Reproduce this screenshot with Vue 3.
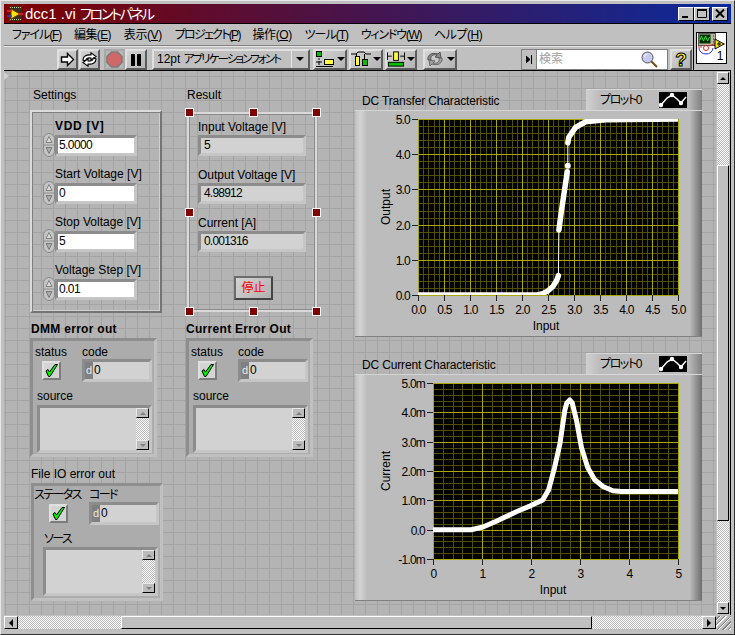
<script setup>
// [text, underlined letter, letter-spacing]
const menus = [
  ['ファイル(', 'F', -1.1],
  ['編集(', 'E', -0.6],
  ['表示(', 'V', -0.4],
  ['プロジェクト(', 'P', -1.7],
  ['操作(', 'O', -0.4],
  ['ツール(', 'T', -1],
  ['ウィンドウ(', 'W', -1.25],
  ['ヘルプ(', 'H', -0.5],
]

const settings = [
  { label: 'VDD [V]', value: '5.0000', bold: true },
  { label: 'Start Voltage [V]', value: '0' },
  { label: 'Stop Voltage [V]', value: '5' },
  { label: 'Voltage Step [V]', value: '0.01' },
]

const results = [
  { label: 'Input Voltage [V]', value: '5' },
  { label: 'Output Voltage [V]', value: '4.98912' },
  { label: 'Current [A]', value: '0.001316' },
]

const handles = ['tl', 'tc', 'tr', 'ml', 'mr', 'bl', 'bc', 'br']

const clusters = [
  { cls: 'dmm', status: 'status', code: 'code', source: 'source' },
  { cls: 'cur', status: 'status', code: 'code', source: 'source' },
  { cls: 'file', status: 'ステータス', code: 'コード', source: 'ソース' },
]

const range = (n) => Array.from({ length: n }, (_, i) => i)

const makeChart = (cfg) => {
  const { x, w, ymin, ymax, xDiv, yDiv, xLabel, yLabel } = cfg
  const y = 9
  const h = 176
  const sx = (v) => x + (v / 5) * w
  const sy = (v) => y + h * (1 - (v - ymin) / (ymax - ymin))
  const line = (pts) => pts.map(([a, b]) => `${sx(a).toFixed(1)},${sy(b).toFixed(1)}`).join(' ')
  const minorX = range(xDiv * 5 + 1).map((i) => Math.round(x + (i * w) / (xDiv * 5)) + 0.5)
  const minorY = range(yDiv * 5 + 1).map((i) => Math.round(y + (i * h) / (yDiv * 5)) + 0.5)
  const majorX = range(xDiv + 1).map((i) => Math.round(x + (i * w) / xDiv) + 0.5)
  const majorY = range(yDiv + 1).map((i) => Math.round(y + (i * h) / yDiv) + 0.5)
  return {
    ...cfg, y, h, minorX, minorY, majorX, majorY,
    clip: cfg.id + '-clip',
    xLabels: xLabel.map((t, i) => ({ t, x: majorX[i] })),
    yLabels: yLabel.map((t, i) => ({ t, y: majorY[i] })),
    thin: cfg.thin.map(line),
    thick: cfg.thick.map(line),
    dots: (cfg.dots || []).map(([a, b]) => ({ cx: sx(a), cy: sy(b) })),
  }
}

const charts = [
  makeChart({
    id: 'transfer',
    cls: 'chart-a',
    title: 'DC Transfer Characteristic',
    x: 63, w: 260, ymin: 0, ymax: 5, xDiv: 10, yDiv: 5,
    xLabel: ['0.0', '0.5', '1.0', '1.5', '2.0', '2.5', '3.0', '3.5', '4.0', '4.5', '5.0'],
    yLabel: ['5.0', '4.0', '3.0', '2.0', '1.0', '0.0'],
    axisX: 191, axisY: 'Output', textRight: 55, tickLeft: 57,
    stroke: 5.5,
    thin: [[[2.7, 0.55], [2.71, 1.8]], [[2.88, 3.67], [2.88, 4.3]]],
    thick: [
      [[0, 0], [2.3, 0], [2.4, 0.04], [2.5, 0.12], [2.6, 0.25], [2.67, 0.42], [2.7, 0.55]],
      [[2.71, 1.85], [2.75, 2.3], [2.8, 2.8], [2.85, 3.3], [2.87, 3.5]],
      [[2.88, 4.32], [2.9, 4.48], [3.03, 4.76], [3.22, 4.92], [3.61, 4.98], [5, 5]],
    ],
    dots: [[2.88, 3.67]],
  }),
  makeChart({
    id: 'current',
    cls: 'chart-b',
    title: 'DC Current Characteristic',
    x: 78, w: 245, ymin: -1, ymax: 5, xDiv: 5, yDiv: 6,
    xLabel: ['0', '1', '2', '3', '4', '5'],
    yLabel: ['5.0m', '4.0m', '3.0m', '2.0m', '1.0m', '0.0', '-1.0m'],
    axisX: 198, axisY: 'Current', textRight: 70, tickLeft: 72,
    stroke: 5,
    thin: [],
    thick: [[
      [0, 0], [0.78, 0], [1.02, 0.09], [1.29, 0.29], [1.7, 0.61], [2.0, 0.82], [2.24, 1.01],
      [2.36, 1.36], [2.48, 2.11], [2.59, 2.92], [2.69, 4.07], [2.73, 4.32], [2.79, 4.42],
      [2.84, 4.32], [2.93, 3.71], [3.03, 2.79], [3.16, 2.11], [3.3, 1.7], [3.47, 1.47],
      [3.67, 1.33], [3.84, 1.3], [5, 1.3],
    ]],
  }),
]
</script>

<template>
  <div class="window">
    <div class="titlebar">
      <svg class="title-icon" width="16" height="16" viewBox="0 0 16 16">
        <rect x="2" y="0" width="13" height="15" fill="#3a3020" />
        <path d="M3 1h1v1H3zM5 1h1v1H5zM7 1h1v1H7zM9 1h1v1H9zM11 1h1v1h-1zM13 1h1v1h-1zM3 13h1v1H3zM5 13h1v1H5zM7 13h1v1H7zM9 13h1v1H9zM11 13h1v1h-1zM13 13h1v1h-1z" fill="#c8c8a0" />
        <path d="M4 3l9 5-9 5z" fill="#ffe000" stroke="#604000" stroke-width="1" />
        <path d="M0 5h5M11 8h5" stroke="#ff2020" stroke-width="1.4" />
        <path d="M0 10h5" stroke="#2040ff" stroke-width="1.4" />
      </svg>
      <span class="title-text">dcc1 .vi <span class="title-jp">フロントパネル</span></span>
      <div class="win-buttons">
        <button class="win-btn">
          <svg width="10" height="9"><rect x="1" y="7" width="6" height="2" fill="#000" /></svg>
        </button>
        <button class="win-btn">
          <svg width="10" height="9"><path d="M0.5 1.5h9v7h-9z" fill="none" stroke="#000" /><rect y="0" width="10" height="2" fill="#000" /></svg>
        </button>
        <button class="win-btn close-btn">
          <svg width="10" height="9"><path d="M1 0.5l8 8M9 0.5l-8 8" stroke="#000" stroke-width="2" /></svg>
        </button>
      </div>
    </div>

    <div class="chrome">
      <div class="bars">
        <div class="menubar">
          <span v-for="m in menus" :key="m[1]" class="menu-item" :style="{ letterSpacing: m[2] + 'px' }">{{ m[0] }}<u>{{ m[1] }}</u>)</span>
        </div>
        <div class="toolbar">
          <button class="tool tool-run">
            <svg width="15" height="15" viewBox="0 0 15 15"><path d="M1.5 5h6V1.5l6 6-6 6V10h-6z" fill="#fff" stroke="#000" stroke-width="1.4" /></svg>
          </button>
          <button class="tool tool-run gap-1">
            <svg width="17" height="15" viewBox="0 0 17 15">
              <path d="M2 8C2 4 6 2.5 10 3V0.8l5 3.7-5 3.6V6C7 5.6 5 6.3 4.6 9z" fill="#fff" stroke="#000" stroke-width="1.1" />
              <path d="M15 7c0 4-4 5.5-8 5v2.2l-5-3.7 5-3.6V9c3 .4 5-.3 5.4-3z" fill="#fff" stroke="#000" stroke-width="1.1" />
            </svg>
          </button>
          <button class="tool tool-run tool-flat gap-4">
            <svg width="17" height="17" viewBox="0 0 17 17">
              <path d="M5.5 1h6L16 5.5v6L11.5 16h-6L1 11.5v-6z" fill="#d06868" stroke="#7c7c7c" stroke-width="1.6" />
            </svg>
          </button>
          <button class="tool tool-pause">
            <svg width="12" height="13"><rect x="1" y="1" width="4" height="12" fill="#000" /><rect x="7" y="1" width="4" height="12" fill="#000" /></svg>
          </button>
          <div class="font-ring">
            <span class="font-name">12pt <span class="font-jp">アプリケーションフォント</span></span>
            <span class="font-arrow"><i class="caret"></i></span>
          </div>
          <button class="tool tool-menu gap-3">
            <svg width="20" height="16" viewBox="0 0 20 16">
              <rect x="1.5" y="0.5" width="5" height="5" fill="#00c000" stroke="#000" />
              <path d="M4 7v2M1 11h6M4 10v4M1 15.5h17" stroke="#000" />
              <rect x="9.5" y="8.5" width="9" height="5" fill="#ffff40" stroke="#000" />
            </svg>
            <i class="caret"></i>
          </button>
          <button class="tool tool-menu gap-2">
            <svg width="20" height="16" viewBox="0 0 20 16">
              <path d="M0 3h5l2-2h6l2 2h5" fill="none" stroke="#000" />
              <path d="M5.5 3v2M13.5 3v5" stroke="#000" />
              <rect x="4.5" y="5.5" width="4" height="9" fill="#ffff40" stroke="#000" />
              <rect x="11.5" y="8.5" width="5" height="6" fill="#00c000" stroke="#000" />
            </svg>
            <i class="caret"></i>
          </button>
          <button class="tool tool-menu dist gap-2">
            <svg width="19" height="16" viewBox="0 0 19 16">
              <path d="M0.5 1v8M18.5 1v8M1 5h4M14 5h4" stroke="#000" />
              <rect x="7" y="0.5" width="5" height="9" fill="#ffff40" stroke="#000" />
              <rect x="1.5" y="11.5" width="16" height="4" fill="#00c000" stroke="#000" />
            </svg>
            <i class="caret"></i>
          </button>
          <button class="tool tool-menu gap-6">
            <svg width="20" height="16" viewBox="0 0 20 16">
              <path d="M3 9C2 4 7 1 13 3l2-2 1 6-6-1 2-2C8 3 5 5 6 9z" fill="#8a8a8a" stroke="#555" />
              <path d="M17 7c1 5-4 8-10 6l-2 2-1-6 6 1-2 2c4 1 7-1 6-5z" fill="#a0a0a0" stroke="#666" />
            </svg>
            <i class="caret"></i>
          </button>
          <div class="search">
            <span class="search-btn">
              <svg width="7" height="9"><path d="M0 1l4 3.5-4 3.5zM5.5 0v9" fill="#000" stroke="#000" /></svg>
            </span>
            <span class="search-text">検索</span>
            <svg class="lens" width="17" height="17" viewBox="0 0 17 17">
              <path d="M10 10l6 6" stroke="#7a4a10" stroke-width="2" />
              <circle cx="6.5" cy="6.5" r="5.5" fill="#c8c8f4" stroke="#555" />
              <path d="M3.5 6a3 3 0 0 1 3-3" stroke="#fff" fill="none" />
            </svg>
          </div>
          <button class="tool tool-help"><span class="help-mark">?</span></button>
        </div>
      </div>
      <div class="icon-pane">
        <div class="vi-icon">
          <svg width="29" height="22" viewBox="0 0 29 22">
            <rect x="1.5" y="0.5" width="17" height="12" fill="#b8b8a0" stroke="#555" />
            <rect x="2.5" y="1.5" width="11" height="9" fill="#003000" />
            <path d="M3 7l1.5-4 2 5 2-5 2 5 2-4" fill="none" stroke="#30e030" />
            <path d="M16 3h1M16 6h1M16 9h1" stroke="#333" />
            <path d="M2 15a7 6 0 0 0 14 0" fill="none" stroke="#2030e0" />
            <circle cx="9" cy="15" r="2.5" fill="none" stroke="#e02020" />
            <path d="M1 14h4M12 13l5-2h11" fill="none" stroke="#e02020" />
            <path d="M18 6l9 5-9 5z" fill="#ffe800" stroke="#000" />
            <path d="M20 11h4M22 9v4" stroke="#000" />
          </svg>
          <span class="vi-num">1</span>
        </div>
      </div>
    </div>

    <div class="panel-row">
      <div class="canvas">
        <i class="corner"></i>
        <span class="free-label settings-title">Settings</span>
        <span class="free-label result-title">Result</span>

        <div class="settings-box">
          <div v-for="s in settings" :key="s.label" class="ctl">
            <div class="ctl-label" :class="{ bold: s.bold }">{{ s.label }}</div>
            <div class="ctl-row">
              <svg class="spinner" width="12" height="24" viewBox="0 0 12 24">
                <rect x="0.5" y="0.5" width="11" height="23" rx="5.5" fill="#c4c4c4" stroke="#8a8a8a" />
                <path d="M6 3.5l3 6H3z" fill="#d8d8d8" stroke="#707070" stroke-width="0.8" />
                <path d="M6 20.5l3-6H3z" fill="#a8a8a8" stroke="#707070" stroke-width="0.8" />
                <path d="M1 12h10" stroke="#8f8f8f" />
              </svg>
              <div class="field control-field">{{ s.value }}</div>
            </div>
          </div>
        </div>

        <div class="result-box">
          <i v-for="h in handles" :key="h" class="handle" :class="h"></i>
          <div v-for="r in results" :key="r.label" class="ctl">
            <div class="ctl-label">{{ r.label }}</div>
            <div class="field indicator-field">{{ r.value }}</div>
          </div>
          <button class="stop-btn">停止</button>
        </div>

        <span class="free-label cl-title dmm-title bold">DMM error out</span>
        <span class="free-label cl-title cur-title bold">Current Error Out</span>
        <span class="free-label file-title">File IO error out</span>

        <div v-for="c in clusters" :key="c.cls" class="cluster" :class="c.cls">
          <span class="cl-status">{{ c.status }}</span>
          <span class="cl-code">{{ c.code }}</span>
          <div class="led">
            <svg width="13" height="13" viewBox="0 0 13 13">
              <path d="M1 7l2-1.5 1.5 2.5L10 0.5h2.5L5 12.5H3.5z" fill="#00f000" stroke="#000" stroke-width="1" />
            </svg>
          </div>
          <div class="field code-field"><span class="radix">d</span><span class="code-val">0</span></div>
          <div class="cl-source">{{ c.source }}</div>
          <div class="field source-field">
            <div class="mini-scroll">
              <span class="mini-btn"><i class="tri-up"></i></span>
              <span class="checker mini-track"></span>
              <span class="mini-btn"><i class="tri-down"></i></span>
            </div>
          </div>
        </div>

        <div v-for="ch in charts" :key="ch.id" class="chart" :class="ch.cls">
          <div class="chart-head">
            <span class="chart-title">{{ ch.title }}</span>
            <div class="legend">
              <span class="legend-name">プロット0</span>
              <svg class="legend-icon" width="28" height="16" viewBox="0 0 28 16">
                <rect width="28" height="16" fill="#000" />
                <path d="M2 13L8 6l5-3 5 4 4 4 5-6" fill="none" stroke="#fff" stroke-width="1.5" />
                <circle cx="2" cy="13" r="2.2" fill="#fff" />
                <circle cx="13" cy="3" r="2.2" fill="#fff" />
                <circle cx="22" cy="11" r="2.2" fill="#fff" />
              </svg>
            </div>
          </div>
          <div class="chart-body">
            <svg class="chart-svg" width="347" height="227" viewBox="0 0 347 227">
              <defs>
                <clipPath :id="ch.clip"><rect :x="ch.x" :y="ch.y" :width="ch.w" :height="ch.h" /></clipPath>
              </defs>
              <rect :x="ch.x" :y="ch.y" :width="ch.w" :height="ch.h" fill="#000" />
              <g shape-rendering="crispEdges" stroke-width="1">
                <line v-for="v in ch.minorX" :key="'mx' + v" :x1="v" :x2="v" :y1="ch.y" :y2="ch.y + ch.h" stroke="#505000" />
                <line v-for="v in ch.minorY" :key="'my' + v" :y1="v" :y2="v" :x1="ch.x" :x2="ch.x + ch.w" stroke="#505000" />
                <line v-for="v in ch.majorX" :key="'Mx' + v" :x1="v" :x2="v" :y1="ch.y" :y2="ch.y + ch.h" stroke="#a8a800" />
                <line v-for="v in ch.majorY" :key="'My' + v" :y1="v" :y2="v" :x1="ch.x" :x2="ch.x + ch.w" stroke="#a8a800" />
                <line v-for="v in ch.majorX" :key="'tx' + v" :x1="v" :x2="v" :y1="ch.y + ch.h" :y2="ch.y + ch.h + 6" stroke="#222" />
                <line v-for="v in ch.majorY" :key="'ty' + v" :y1="v" :y2="v" :x1="ch.tickLeft" :x2="ch.x" stroke="#222" />
              </g>
              <g :clip-path="`url(#${ch.clip})`" fill="none" stroke="#fff" stroke-linecap="round" stroke-linejoin="round">
                <polyline v-for="(p, i) in ch.thin" :key="'t' + i" :points="p" stroke-width="1" />
                <polyline v-for="(p, i) in ch.thick" :key="'k' + i" :points="p" :stroke-width="ch.stroke" />
                <circle v-for="(d, i) in ch.dots" :key="'d' + i" :cx="d.cx" :cy="d.cy" r="3" fill="#fff" stroke="none" />
              </g>
              <text v-for="l in ch.xLabels" :key="'xl' + l.t" class="tick" :x="l.x" :y="ch.y + ch.h + 19" text-anchor="middle">{{ l.t }}</text>
              <text v-for="l in ch.yLabels" :key="'yl' + l.t" class="tick" :x="ch.textRight" :y="l.y + 4" text-anchor="end">{{ l.t }}</text>
              <text :x="ch.axisX" y="220" text-anchor="middle">Input</text>
              <text :transform="`translate(35 97) rotate(-90)`" text-anchor="middle">{{ ch.axisY }}</text>
            </svg>
          </div>
        </div>
      </div>

      <div class="vscroll">
        <span class="scroll-btn vbtn up"><i class="tri-up dark"></i></span>
        <span class="checker vtrack-a"></span>
        <span class="vthumb"></span>
        <span class="checker vtrack-b"></span>
        <span class="scroll-btn vbtn"><i class="tri-down dark"></i></span>
      </div>
    </div>

    <div class="hscroll">
      <span class="scroll-btn hbtn"><i class="tri-left"></i></span>
      <span class="checker htrack-a"></span>
      <span class="hthumb"></span>
      <span class="checker htrack-b"></span>
      <span class="scroll-btn hbtn"><i class="tri-right"></i></span>
      <span class="grip"></span>
    </div>
  </div>
</template>

<style>
html, body {
  margin: 0;
  background: #c0c0c0;
}
</style>

<style scoped>
.window {
  box-sizing: border-box;
  width: 735px;
  height: 635px;
  padding: 3px;
  background: #c0c0c0;
  border: 1px solid;
  border-color: #e8e8e8 #303030 #303030 #e8e8e8;
  overflow: hidden;
  font: 12px/14px "Liberation Sans", "Noto Sans CJK JP", sans-serif;
  font-feature-settings: "palt";
  color: #000;
}

button {
  font: inherit;
  padding: 0;
  margin: 0;
}

.titlebar {
  display: flex;
  align-items: center;
  height: 19px;
  padding-left: 3px;
  background: linear-gradient(90deg, #800000, #0a2a9c);
  color: #fff;
}

.title-icon {
  margin-right: 2px;
}

.title-text {
  font-size: 15px;
  white-space: nowrap;
}

.title-jp {
  font-size: 14px;
  letter-spacing: -2.2px;
}

.win-buttons {
  display: flex;
  margin-left: auto;
  margin-right: 3px;
}

.win-btn {
  display: flex;
  align-items: center;
  justify-content: center;
  box-sizing: border-box;
  width: 16px;
  height: 14px;
  background: #c0c0c0;
  border: 1px solid;
  border-color: #fff #000 #000 #fff;
}

.close-btn {
  margin-left: 2px;
}

.chrome {
  display: flex;
  height: 48px;
  border-top: 1px solid #000;
  border-bottom: 1px solid #000;
  box-sizing: border-box;
}

.bars {
  width: 690px;
  border-right: 1px solid #000;
  box-sizing: border-box;
}

.menubar {
  display: flex;
  align-items: center;
  height: 21px;
  padding-left: 8px;
  border-bottom: 1px solid #808080;
  box-shadow: 0 1px 0 #e8e8e8;
}

.menu-item {
  flex: none;
  white-space: nowrap;
  margin-right: 12.8px;
}

.toolbar {
  display: flex;
  align-items: center;
  height: 22px;
  margin-top: 2px;
  padding-left: 53px;
}

.tool {
  display: flex;
  align-items: center;
  justify-content: center;
  box-sizing: border-box;
  height: 21px;
  background: linear-gradient(135deg, #d4d4d4, #b4b4b4);
  border: 2px solid;
  border-color: #e0e0e0 #5c5c5c #5c5c5c #e0e0e0;
}

.tool-run {
  width: 21px;
}

.tool-pause {
  width: 22px;
}

.tool-flat {
  border-color: #a8a8a8;
  background: #b8b8b8;
}

.tool-menu {
  width: 34px;
  gap: 2px;
}

.tool-menu.dist {
  width: 32px;
}

.tool-help {
  width: 22px;
  margin-left: 2px;
}

.gap-1 { margin-left: 1px; }
.gap-2 { margin-left: 2px; }
.gap-3 { margin-left: 3px; }
.gap-4 { margin-left: 4px; }
.gap-6 { margin-left: 6px; }

.caret {
  display: inline-block;
  flex: none;
  width: 0;
  height: 0;
  border-left: 4px solid transparent;
  border-right: 4px solid transparent;
  border-top: 4px solid #000;
}

.font-ring {
  display: flex;
  align-items: center;
  box-sizing: border-box;
  width: 158px;
  height: 21px;
  margin-left: 5px;
  background: #c0c0c0;
  border: 2px solid;
  border-color: #e0e0e0 #5c5c5c #5c5c5c #e0e0e0;
}

.font-name {
  flex: none;
  width: 137px;
  padding-left: 3px;
  box-sizing: border-box;
  white-space: nowrap;
  overflow: hidden;
}

.font-jp {
  font-size: 11.5px;
  letter-spacing: -1.9px;
}

.font-arrow {
  display: flex;
  align-items: center;
  justify-content: center;
  flex: 1;
  height: 100%;
  border-left: 1px solid #e8e8e8;
}

.search {
  display: flex;
  align-items: center;
  box-sizing: border-box;
  width: 147px;
  height: 21px;
  margin-left: 64px;
  background: #fff;
  border: 1px solid #808080;
}

.search-btn {
  display: flex;
  align-items: center;
  justify-content: center;
  width: 14px;
  height: 100%;
  background: #c0c0c0;
  border-right: 1px solid #808080;
}

.search-text {
  margin-left: 2px;
  color: #a0a0a0;
}

.lens {
  margin-left: auto;
  margin-right: 9px;
}

.help-mark {
  color: #ffff30;
  font-size: 19px;
  font-weight: bold;
  line-height: 17px;
  -webkit-text-stroke: 1px #000;
}

.icon-pane {
  flex: 1;
  display: flex;
  justify-content: center;
  align-items: flex-start;
  padding: 8px 3px 0 0;
}

.vi-icon {
  position: relative;
  box-sizing: border-box;
  width: 31px;
  height: 32px;
  background: #fff;
  border: 1px solid #000;
}

.vi-num {
  position: absolute;
  right: 2px;
  bottom: 0;
  line-height: 13px;
}

.panel-row {
  display: flex;
}

.canvas {
  position: relative;
  width: 712px;
  height: 544px;
  overflow: hidden;
  background-color: #b4b4b4;
  background-image:
    linear-gradient(90deg, #a4a4a4 1px, transparent 1px),
    linear-gradient(#a4a4a4 1px, transparent 1px);
  background-size: 12px 12px;
  background-position: 1px 5px;
}

.corner {
  position: absolute;
  left: 0;
  top: 1px;
  width: 0;
  height: 0;
  border-top: 4px solid transparent;
  border-bottom: 4px solid transparent;
  border-left: 5px solid #d0d0d0;
}

.free-label {
  position: absolute;
  white-space: nowrap;
}

.bold {
  font-weight: bold;
  letter-spacing: 0.7px;
}

.cl-title {
  letter-spacing: 0.3px;
}

.settings-title { left: 29px; top: 17px; }
.result-title { left: 183px; top: 17px; }
.dmm-title { left: 27px; top: 251px; }
.cur-title { left: 182px; top: 251px; }
.file-title { left: 27px; top: 396px; }

.settings-box {
  position: absolute;
  left: 26px;
  top: 39px;
  box-sizing: border-box;
  width: 132px;
  height: 203px;
  padding: 7px 0 0 11px;
  display: flex;
  flex-direction: column;
  gap: 10px;
  border: 2px solid;
  border-color: #dcdcdc #747474 #747474 #dcdcdc;
  box-shadow: inset 1px 1px 0 #808080, inset -1px -1px 0 #d0d0d0;
}

.ctl-label {
  height: 14px;
  margin-left: 12px;
  white-space: nowrap;
}

.ctl-row {
  display: flex;
  align-items: flex-start;
  height: 24px;
}

.spinner {
  flex: none;
}

.field {
  box-sizing: border-box;
  border: 3px solid;
  border-color: #8c8c8c #c6c6c6 #c6c6c6 #8c8c8c;
}

.control-field {
  width: 82px;
  height: 21px;
  margin-top: 2px;
  padding-left: 1px;
  background: #fff;
  line-height: 15px;
  letter-spacing: -0.6px;
}

.result-box {
  position: absolute;
  left: 183px;
  top: 41px;
  box-sizing: border-box;
  width: 130px;
  height: 200px;
  padding: 6px 0 0 9px;
  display: flex;
  flex-direction: column;
  gap: 12px;
  border: 2px solid #d8d8d8;
  box-shadow: inset 1px 1px 0 #8c8c8c, inset -1px -1px 0 #8c8c8c;
}

.result-box .ctl-label {
  margin: 0 0 1px;
  height: 14px;
}

.indicator-field {
  width: 108px;
  height: 21px;
  padding-left: 3px;
  background: #d2d2d2;
  line-height: 15px;
  letter-spacing: -0.8px;
}

.stop-btn {
  width: 39px;
  height: 24px;
  margin: 12px 0 0 36px;
  color: #ff0000;
  background: linear-gradient(135deg, #d4d4d4, #b0b0b0);
  border: 2px solid;
  border-color: #6c6c6c #444 #444 #6c6c6c;
}

.handle {
  position: absolute;
  box-sizing: border-box;
  width: 9px;
  height: 9px;
  background: #800000;
  border: 1px solid #fff;
}

.tl { left: -4px; top: -6px; }
.tc { left: 60px; top: -6px; }
.tr { left: 123px; top: -6px; }
.ml { left: -4px; top: 94px; }
.mr { left: 123px; top: 94px; }
.bl { left: -4px; top: 193px; }
.bc { left: 60px; top: 193px; }
.br { left: 123px; top: 193px; }

.cluster {
  position: absolute;
  box-sizing: border-box;
  display: grid;
  grid-template-columns: 49px 70px;
  grid-template-rows: 14px 23px 14px auto;
  align-content: start;
  width: 127px;
  height: 119px;
  padding-top: 4px;
  background: #acacac;
  border: 3px solid;
  border-color: #8e8e8e #c0c0c0 #c0c0c0 #8e8e8e;
}

.cluster.dmm { left: 26px; top: 267px; }
.cluster.cur { left: 182px; top: 267px; }
.cluster.file {
  left: 27px;
  top: 412px;
  width: 132px;
  height: 118px;
  padding-top: 2px;
  grid-template-columns: 55px 70px;
}

.file .cl-status,
.file .cl-code,
.file .cl-source {
  letter-spacing: -1.6px;
}

.cl-status {
  margin-left: 2px;
  white-space: nowrap;
}

.file .cl-status {
  margin-left: 0;
}

.led {
  display: flex;
  align-items: center;
  justify-content: center;
  box-sizing: border-box;
  width: 19px;
  height: 19px;
  margin: 2px 0 0 9px;
  background: #d4d4d4;
  border: 2px solid;
  border-color: #e0e0e0 #7c7c7c #7c7c7c #e0e0e0;
}

.file .led {
  margin-left: 15px;
}

.code-field {
  display: flex;
  background: #d2d2d2;
  line-height: 17px;
}

.radix {
  width: 8px;
  padding-left: 1px;
  box-sizing: border-box;
  font-size: 11px;
  color: #e8e8e8;
  background: #808080;
}

.code-val {
  padding-left: 1px;
}

.cl-source {
  grid-column: 1 / 3;
  margin: 7px 0 0 4px;
}

.file .cl-source {
  margin-left: 10px;
}

.source-field {
  grid-column: 1 / 3;
  display: flex;
  justify-content: flex-end;
  width: 115px;
  height: 48px;
  margin: 9px 0 0 4px;
  background: #d2d2d2;
}

.file .source-field {
  margin-left: 9px;
  height: 49px;
  margin-top: 8px;
}

.mini-scroll {
  display: flex;
  flex-direction: column;
  width: 13px;
}

.mini-btn {
  display: flex;
  align-items: center;
  justify-content: center;
  flex: none;
  box-sizing: border-box;
  height: 10px;
  background: #bcbcbc;
  border: 1px solid;
  border-color: #e8e8e8 #000 #000 #e8e8e8;
}

.mini-track {
  flex: 1;
}

.checker {
  background-color: #c0c0c0;
  background-image: repeating-conic-gradient(#fff 0 25%, #b8b8b8 0 50%);
  background-size: 2px 2px;
}

.tri-up, .tri-down, .tri-left, .tri-right {
  display: block;
  width: 0;
  height: 0;
}

.tri-up {
  border-left: 3px solid transparent;
  border-right: 3px solid transparent;
  border-bottom: 3px solid #808080;
}

.tri-down {
  border-left: 3px solid transparent;
  border-right: 3px solid transparent;
  border-top: 3px solid #808080;
}

.tri-up.dark { border-bottom-color: #000; }
.tri-down.dark { border-top-color: #000; }

.tri-left {
  border-top: 4px solid transparent;
  border-bottom: 4px solid transparent;
  border-right: 4px solid #000;
}

.tri-right {
  border-top: 4px solid transparent;
  border-bottom: 4px solid transparent;
  border-left: 4px solid #000;
}

.chart {
  position: absolute;
  left: 351px;
  width: 347px;
}

.chart-a { top: 18px; }
.chart-b { top: 282px; }

.chart-head {
  display: flex;
  justify-content: space-between;
  height: 21px;
}

.chart-title {
  margin: 5px 0 0 7px;
  letter-spacing: -0.15px;
  white-space: nowrap;
}

.legend {
  position: relative;
  display: flex;
  align-items: center;
  box-sizing: border-box;
  width: 116px;
  height: 22px;
  padding-left: 14px;
  background: linear-gradient(90deg, #d0d0d0, #bcbcbc 12%, #bcbcbc 88%, #808080);
  border-top: 1px solid #d8d8d8;
  border-bottom: 1px solid #d8d8d8;
}

.legend-name {
  width: 59px;
  letter-spacing: -1.4px;
}

.chart-body {
  height: 227px;
  background: linear-gradient(90deg, #c0c0c0 0, #d4d4d4 1.5%, #bcbcbc 3.5%, #bcbcbc 96.5%, #6e6e6e 100%);
  border-top: 1px solid #d4d4d4;
  border-bottom: 1px solid #808080;
  box-sizing: border-box;
}

.chart-svg {
  display: block;
  margin-top: -1px;
}

.chart-svg text {
  font: 12px "Liberation Sans", "Noto Sans CJK JP", sans-serif;
  fill: #000;
}

.chart-svg .tick {
  letter-spacing: -0.8px;
}

.vscroll {
  display: flex;
  flex-direction: column;
  width: 15px;
  box-sizing: border-box;
  height: 544px;
  padding: 1px;
  border-right: 1px solid #000;
}

.scroll-btn {
  display: flex;
  align-items: center;
  justify-content: center;
  flex: none;
  box-sizing: border-box;
  background: #c0c0c0;
  border: 1px solid;
  border-color: #fff #000 #000 #fff;
}

.vbtn {
  height: 12px;
}

.vtrack-a {
  height: 81px;
  flex: none;
}

.vthumb {
  height: 356px;
  flex: none;
  background: #c0c0c0;
  box-sizing: border-box;
  border: 1px solid;
  border-color: #fff #000 #000 #fff;
}

.vtrack-b {
  flex: 1;
}

.hscroll {
  display: flex;
  height: 15px;
  box-sizing: border-box;
  padding-top: 1px;
}

.hbtn {
  width: 14px;
  height: 13px;
}

.htrack-a {
  width: 103px;
  height: 13px;
}

.hthumb {
  width: 471px;
  height: 13px;
  box-sizing: border-box;
  background: #c0c0c0;
  border: 1px solid;
  border-color: #fff #000 #000 #fff;
}

.htrack-b {
  flex: 1;
  height: 13px;
}

.grip {
  width: 15px;
  height: 14px;
  background: repeating-linear-gradient(135deg, #c0c0c0 0 2px, #808080 2px 3px, #fff 3px 4px);
}
</style>
